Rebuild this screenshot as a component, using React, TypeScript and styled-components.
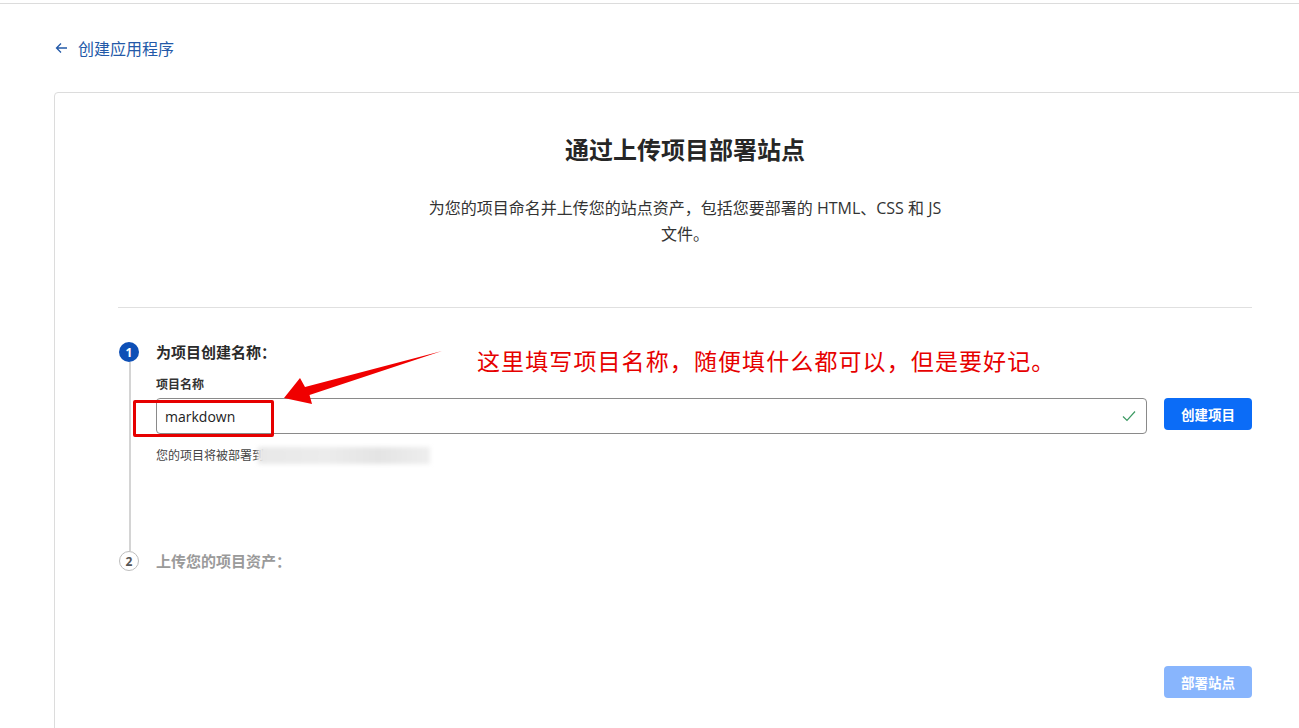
import * as React from 'react'
import styled, { createGlobalStyle } from 'styled-components'

const GlobalStyle = createGlobalStyle`
  html, body {
    margin: 0;
    padding: 0;
    background: #fff;
    overflow: hidden;
  }
  body {
    font-family: "Open Sans", "Noto Sans", "Noto Sans CJK SC", sans-serif;
    color: #222;
  }
`

const Page = styled.div`
  position: relative;
  width: 1299px;
  height: 728px;
  overflow: hidden;
`

const TopRule = styled.div`
  height: 3px;
  border-bottom: 1px solid #dcdcdc;
`

const Main = styled.div`
  padding: 0 0 0 54px;
`

const BackLink = styled.a`
  display: flex;
  align-items: center;
  gap: 10px;
  height: 22px;
  margin: 33px 0 33px 1px;
  color: #2359a8;
  font-size: 16px;
  text-decoration: none;
  cursor: pointer;
`

const Card = styled.div`
  width: 1263px;
  box-sizing: border-box;
  border: 1px solid #dcdcdc;
  border-radius: 4px;
  padding: 38px 64px 40px 63px;
`

const Intro = styled.div`
  display: flex;
  flex-direction: column;
  align-items: center;
  padding-bottom: 60px;
  border-bottom: 1px solid #e0e0e0;
`

const Title = styled.h1`
  margin: 0;
  font-size: 24px;
  line-height: 38px;
  font-weight: 700;
  color: #262626;
`

const Description = styled.p`
  margin: 26px 0 0;
  max-width: 526px;
  text-align: center;
  font-size: 16px;
  line-height: 26px;
  color: #333;
`

const Steps = styled.div`
  padding-top: 34px;
`

const Step = styled.div<{ $last?: boolean }>`
  position: relative;
  display: grid;
  grid-template-columns: 20px 1fr;
  column-gap: 18px;
  padding-bottom: ${p => (p.$last ? '0' : '87px')};

  &::before {
    content: '';
    display: ${p => (p.$last ? 'none' : 'block')};
    position: absolute;
    left: 11px;
    top: 20px;
    bottom: 0;
    width: 2px;
    background: #d4d4d4;
  }
`

const StepBadge = styled.div<{ $active?: boolean }>`
  width: 20px;
  height: 20px;
  margin-left: 1px;
  box-sizing: border-box;
  border-radius: 50%;
  display: flex;
  align-items: center;
  justify-content: center;
  font-size: 12px;
  font-weight: 700;
  background: ${p => (p.$active ? '#0d4fb6' : '#fff')};
  color: ${p => (p.$active ? '#fff' : '#555')};
  border: ${p => (p.$active ? 'none' : '1px solid #bdbdbd')};
`

const StepBody = styled.div`
  display: flex;
  flex-direction: column;
`

const StepTitle = styled.div<{ $muted?: boolean }>`
  font-size: 15px;
  line-height: 20px;
  font-weight: 700;
  color: ${p => (p.$muted ? '#9a9a9a' : '#2a2a2a')};
`

const FieldLabel = styled.label`
  margin-top: 15px;
  font-size: 12px;
  line-height: 16px;
  font-weight: 700;
  color: #333;
`

const FieldRow = styled.div`
  display: flex;
  align-items: flex-start;
  gap: 17px;
  margin-top: 5px;
`

const InputBox = styled.div`
  flex: 1;
  height: 36px;
  box-sizing: border-box;
  border: 1px solid #8a8a8a;
  border-radius: 4px;
  display: flex;
  align-items: center;
  justify-content: space-between;
  padding: 0 10px 0 8px;
  font-size: 14px;
  color: #222;
`

const Button = styled.button<{ $disabled?: boolean }>`
  width: 88px;
  height: 32px;
  border: none;
  border-radius: 4px;
  background: ${p => (p.$disabled ? '#88b5fd' : '#0b6cf7')};
  color: #fff;
  font-family: inherit;
  font-size: 13.5px;
  font-weight: 700;
  cursor: ${p => (p.$disabled ? 'default' : 'pointer')};
`

const Helper = styled.div`
  margin-top: 13px;
  display: flex;
  align-items: center;
  font-size: 12px;
  line-height: 16px;
  color: #444;
`

const Blurred = styled.span`
  display: inline-block;
  width: 172px;
  height: 17px;
  margin-left: -6px;
  background: linear-gradient(90deg, #e8e8e8, #ececec 40%, #e4e4e4 70%, #eeeeee);
  filter: blur(2px);
`

const Footer = styled.div`
  display: flex;
  justify-content: flex-end;
  margin-top: 95px;
`

const Note = styled.div`
  position: absolute;
  left: 477px;
  top: 344px;
  font-family: "Noto Sans CJK SC", sans-serif;
  font-size: 23px;
  letter-spacing: 1.1px;
  line-height: 32px;
  color: #e60000;
`

const Highlight = styled.div`
  position: absolute;
  left: 133px;
  top: 400px;
  width: 141px;
  height: 37px;
  box-sizing: border-box;
  border: 3px solid #e60000;
  border-radius: 2px;
`

const Overlay = styled.svg`
  position: absolute;
  left: 0;
  top: 0;
  pointer-events: none;
`

const BackArrow = () => (
  <svg width="13" height="12" viewBox="0 0 13 12" fill="none" stroke="currentColor" strokeWidth="1.3">
    <path d="M12 6H1.5M6 1.5L1.5 6 6 10.5" />
  </svg>
)

const Check = () => (
  <svg width="14" height="12" viewBox="0 0 14 12" fill="none" stroke="#3d9a63" strokeWidth="1.2">
    <path d="M1 6.5l4 4L13 1.5" />
  </svg>
)

export default function App() {
  return (
    <Page>
      <GlobalStyle />
      <TopRule />
      <Main>
        <BackLink>
          <BackArrow />
          创建应用程序
        </BackLink>
        <Card>
          <Intro>
            <Title>通过上传项目部署站点</Title>
            <Description>
              为您的项目命名并上传您的站点资产，包括您要部署的 HTML、CSS 和 JS 文件。
            </Description>
          </Intro>
          <Steps>
            <Step>
              <StepBadge $active>1</StepBadge>
              <StepBody>
                <StepTitle>为项目创建名称：</StepTitle>
                <FieldLabel>项目名称</FieldLabel>
                <FieldRow>
                  <InputBox>
                    markdown
                    <Check />
                  </InputBox>
                  <Button>创建项目</Button>
                </FieldRow>
                <Helper>
                  您的项目将被部署到
                  <Blurred />
                </Helper>
              </StepBody>
            </Step>
            <Step $last>
              <StepBadge>2</StepBadge>
              <StepBody>
                <StepTitle $muted>上传您的项目资产：</StepTitle>
              </StepBody>
            </Step>
          </Steps>
          <Footer>
            <Button $disabled>部署站点</Button>
          </Footer>
        </Card>
      </Main>

      <Note>这里填写项目名称，随便填什么都可以，但是要好记。</Note>
      <Highlight />
      <Overlay width="1299" height="728" viewBox="0 0 1299 728">
        <polygon
          points="284,398 312,404 309.5,395 442,351 305,387 300,378"
          fill="#f00000"
        />
      </Overlay>
    </Page>
  )
}
